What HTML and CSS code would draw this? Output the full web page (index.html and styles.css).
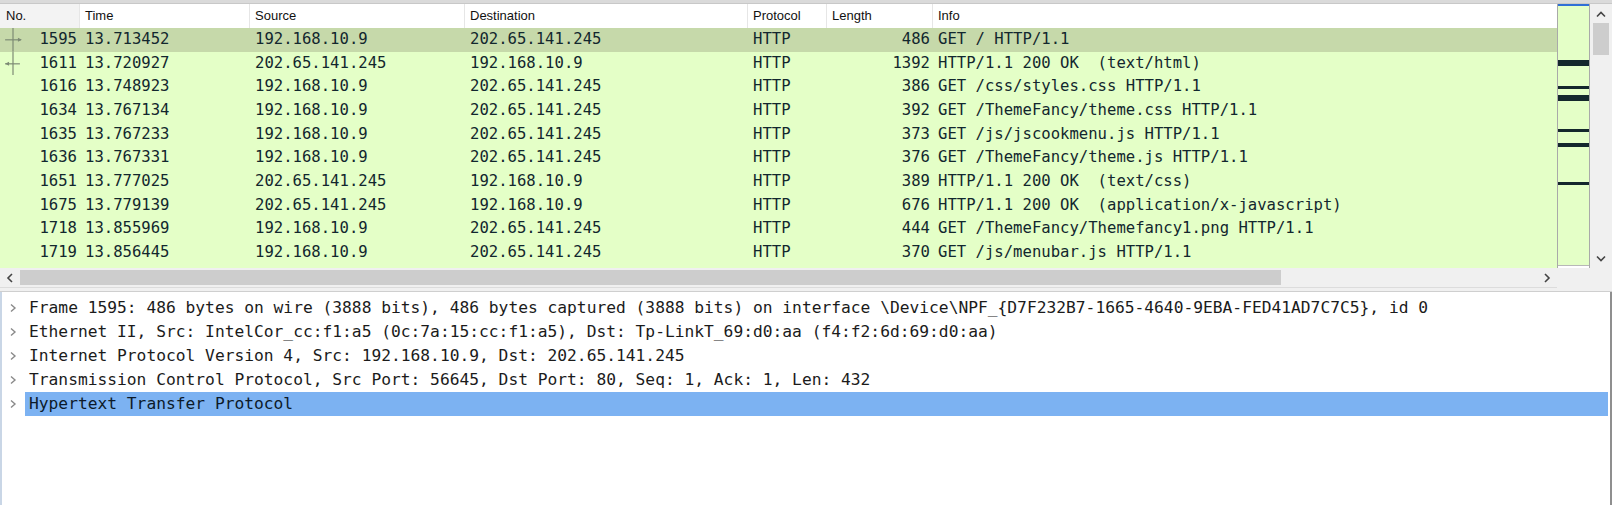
FILE: index.html
```html
<!DOCTYPE html>
<html>
<head>
<meta charset="utf-8">
<link rel="stylesheet" href="styles.css">
</head>
<body>
<div class="app">
  <div class="top-edge"></div>
  <div class="packet-area">
    <div class="list">
      <div class="hdr">
        <div class="hc hc-no">No.</div>
        <div class="hc">Time</div>
        <div class="hc">Source</div>
        <div class="hc">Destination</div>
        <div class="hc">Protocol</div>
        <div class="hc">Length</div>
        <div class="hc hc-last">Info</div>
      </div>
      <div class="rows">
        <div class="row sel">
          <div class="c no"><svg class="rel" width="26" height="24" viewBox="0 0 26 24"><line x1="13" y1="0" x2="13" y2="24" stroke="#7c8a74" stroke-width="1.2"/><line x1="5" y1="12" x2="21" y2="12" stroke="#7c8a74" stroke-width="1.2"/><path d="M18 10 L22 12 L18 14 Z" fill="#7c8a74"/></svg>1595</div>
          <div class="c">13.713452</div><div class="c">192.168.10.9</div><div class="c">202.65.141.245</div><div class="c">HTTP</div><div class="c len">486</div><div class="c info">GET / HTTP/1.1</div>
        </div>
        <div class="row">
          <div class="c no"><svg class="rel" width="26" height="24" viewBox="0 0 26 24"><line x1="13" y1="0" x2="13" y2="24" stroke="#7c8a74" stroke-width="1.2"/><line x1="5" y1="12" x2="20" y2="12" stroke="#7c8a74" stroke-width="1.2"/><path d="M9 10 L5 12 L9 14 Z" fill="#7c8a74"/></svg>1611</div>
          <div class="c">13.720927</div><div class="c">202.65.141.245</div><div class="c">192.168.10.9</div><div class="c">HTTP</div><div class="c len">1392</div><div class="c info">HTTP/1.1 200 OK  (text/html)</div>
        </div>
        <div class="row">
          <div class="c no">1616</div>
          <div class="c">13.748923</div><div class="c">192.168.10.9</div><div class="c">202.65.141.245</div><div class="c">HTTP</div><div class="c len">386</div><div class="c info">GET /css/styles.css HTTP/1.1</div>
        </div>
        <div class="row">
          <div class="c no">1634</div>
          <div class="c">13.767134</div><div class="c">192.168.10.9</div><div class="c">202.65.141.245</div><div class="c">HTTP</div><div class="c len">392</div><div class="c info">GET /ThemeFancy/theme.css HTTP/1.1</div>
        </div>
        <div class="row">
          <div class="c no">1635</div>
          <div class="c">13.767233</div><div class="c">192.168.10.9</div><div class="c">202.65.141.245</div><div class="c">HTTP</div><div class="c len">373</div><div class="c info">GET /js/jscookmenu.js HTTP/1.1</div>
        </div>
        <div class="row">
          <div class="c no">1636</div>
          <div class="c">13.767331</div><div class="c">192.168.10.9</div><div class="c">202.65.141.245</div><div class="c">HTTP</div><div class="c len">376</div><div class="c info">GET /ThemeFancy/theme.js HTTP/1.1</div>
        </div>
        <div class="row">
          <div class="c no">1651</div>
          <div class="c">13.777025</div><div class="c">202.65.141.245</div><div class="c">192.168.10.9</div><div class="c">HTTP</div><div class="c len">389</div><div class="c info">HTTP/1.1 200 OK  (text/css)</div>
        </div>
        <div class="row">
          <div class="c no">1675</div>
          <div class="c">13.779139</div><div class="c">202.65.141.245</div><div class="c">192.168.10.9</div><div class="c">HTTP</div><div class="c len">676</div><div class="c info">HTTP/1.1 200 OK  (application/x-javascript)</div>
        </div>
        <div class="row">
          <div class="c no">1718</div>
          <div class="c">13.855969</div><div class="c">192.168.10.9</div><div class="c">202.65.141.245</div><div class="c">HTTP</div><div class="c len">444</div><div class="c info">GET /ThemeFancy/Themefancy1.png HTTP/1.1</div>
        </div>
        <div class="row">
          <div class="c no">1719</div>
          <div class="c">13.856445</div><div class="c">192.168.10.9</div><div class="c">202.65.141.245</div><div class="c">HTTP</div><div class="c len">370</div><div class="c info">GET /js/menubar.js HTTP/1.1</div>
        </div>
      </div>
    </div>
    <div class="minimap">
      <div class="mark mark-sel" style="top:0px"></div>
      <div class="mark" style="top:56px;height:6px"></div>
      <div class="mark" style="top:82px;height:3px"></div>
      <div class="mark" style="top:91px;height:6px"></div>
      <div class="mark" style="top:125px;height:3px"></div>
      <div class="mark" style="top:139px;height:4px"></div>
      <div class="mark" style="top:178px;height:3px"></div>
      <div class="mini-end"></div>
    </div>
    <div class="vscroll">
      <div class="arrow-v"><svg width="12" height="8" viewBox="0 0 12 8"><polyline points="2,6.5 6,2.5 10,6.5" fill="none" stroke="#444" stroke-width="1.6"/></svg></div>
      <div class="vtrack"><div class="vthumb"></div></div>
      <div class="arrow-v"><svg width="12" height="8" viewBox="0 0 12 8"><polyline points="2,1.5 6,5.5 10,1.5" fill="none" stroke="#444" stroke-width="1.6"/></svg></div>
    </div>
    <div class="hscroll">
      <div class="arrow-h"><svg width="8" height="12" viewBox="0 0 8 12"><polyline points="6,2 2,6 6,10" fill="none" stroke="#444" stroke-width="1.6"/></svg></div>
      <div class="htrack"><div class="hthumb"></div></div>
      <div class="arrow-h"><svg width="8" height="12" viewBox="0 0 8 12"><polyline points="2,2 6,6 2,10" fill="none" stroke="#444" stroke-width="1.6"/></svg></div>
    </div>
    <div class="corner"></div>
  </div>
  <div class="splitter"></div>
  <div class="detail">
    <div class="trow"><span class="exp"><svg width="8" height="12" viewBox="0 0 8 12"><polyline points="2,2.5 6,6 2,9.5" fill="none" stroke="#8a8a8a" stroke-width="1.4"/></svg></span><span class="tlabel">Frame 1595: 486 bytes on wire (3888 bits), 486 bytes captured (3888 bits) on interface \Device\NPF_{D7F232B7-1665-4640-9EBA-FED41AD7C7C5}, id 0</span></div>
    <div class="trow"><span class="exp"><svg width="8" height="12" viewBox="0 0 8 12"><polyline points="2,2.5 6,6 2,9.5" fill="none" stroke="#8a8a8a" stroke-width="1.4"/></svg></span><span class="tlabel">Ethernet II, Src: IntelCor_cc:f1:a5 (0c:7a:15:cc:f1:a5), Dst: Tp-LinkT_69:d0:aa (f4:f2:6d:69:d0:aa)</span></div>
    <div class="trow"><span class="exp"><svg width="8" height="12" viewBox="0 0 8 12"><polyline points="2,2.5 6,6 2,9.5" fill="none" stroke="#8a8a8a" stroke-width="1.4"/></svg></span><span class="tlabel">Internet Protocol Version 4, Src: 192.168.10.9, Dst: 202.65.141.245</span></div>
    <div class="trow"><span class="exp"><svg width="8" height="12" viewBox="0 0 8 12"><polyline points="2,2.5 6,6 2,9.5" fill="none" stroke="#8a8a8a" stroke-width="1.4"/></svg></span><span class="tlabel">Transmission Control Protocol, Src Port: 56645, Dst Port: 80, Seq: 1, Ack: 1, Len: 432</span></div>
    <div class="trow"><span class="exp"><svg width="8" height="12" viewBox="0 0 8 12"><polyline points="2,2.5 6,6 2,9.5" fill="none" stroke="#8a8a8a" stroke-width="1.4"/></svg></span><span class="tlabel tsel">Hypertext Transfer Protocol</span></div>
  </div>
</div>
</body>
</html>
```

FILE: styles.css
```css
* { box-sizing: border-box; }
html, body { margin: 0; padding: 0; }
body {
  width: 1612px;
  height: 505px;
  overflow: hidden;
  background: #f0f0f0;
  font-family: "Liberation Sans", Arial, sans-serif;
}
.app {
  width: 1612px;
  height: 505px;
  display: flex;
  flex-direction: column;
}
.top-edge {
  height: 4px;
  background: #dadada;
  border-bottom: 1px solid #c8c8c8;
}
.packet-area {
  display: grid;
  grid-template-columns: 1557px 33px 22px;
  grid-template-rows: 264px 20px;
}
.list {
  overflow: hidden;
  background: #e4ffc7;
  display: flex;
  flex-direction: column;
}
.hdr {
  height: 24px;
  flex: none;
  display: grid;
  grid-template-columns: 80px 170px 215px 283px 79px 106px 1fr;
  background: #ffffff;
  font-size: 13px;
  color: #111;
}
.hc {
  line-height: 24px;
  padding-left: 5px;
  border-right: 1px solid #e6e6e6;
  white-space: nowrap;
}
.hc-no {
  background: #f3f3f3;
  padding-left: 6px;
}
.hc-last { border-right: none; }
.rows {
  font-family: "DejaVu Sans Mono", "Liberation Mono", monospace;
  font-size: 15.6px;
  color: #12272e;
}
.row {
  height: 23.67px;
  display: grid;
  grid-template-columns: 80px 170px 215px 283px 79px 106px 1fr;
  background: #e4ffc7;
}
.row.sel { background: #c6d9aa; }
.c {
  line-height: 23.67px;
  padding-left: 5px;
  white-space: pre;
  overflow: hidden;
}
.c.no {
  position: relative;
  text-align: right;
  padding-right: 3px;
}
.c.len {
  text-align: right;
  padding-right: 3px;
}
.c.info { padding-left: 5px; }
.rel {
  position: absolute;
  left: 0;
  top: 0;
  height: 100%;
}
.minimap {
  position: relative;
  background: #e4ffc7;
  border-left: 1px solid #a9a9a9;
  border-right: 1px solid #a9a9a9;
  overflow: hidden;
}
.mark {
  position: absolute;
  left: 0;
  right: 0;
  height: 3px;
  background: #14282c;
}
.mark-sel {
  height: 2px;
  background: #2f6fd6;
}
.mini-end {
  position: absolute;
  left: 0;
  right: 0;
  bottom: 0;
  height: 3px;
  background: #ffffff;
  border-top: 1px solid #b8b8b8;
}
.vscroll {
  background: #f0f0f0;
  display: flex;
  flex-direction: column;
  align-items: center;
}
.arrow-v {
  height: 19px;
  width: 100%;
  display: flex;
  align-items: center;
  justify-content: center;
}
.vtrack {
  flex: 1;
  width: 100%;
  padding: 0 3px;
}
.vthumb {
  height: 32px;
  background: #cdcdcd;
}
.hscroll {
  background: #f0f0f0;
  display: flex;
  align-items: center;
  border-bottom: 1px solid #dcdcdc;
}
.arrow-h {
  width: 20px;
  height: 100%;
  display: flex;
  align-items: center;
  justify-content: center;
  flex: none;
}
.htrack {
  flex: 1;
  height: 100%;
  padding: 2px 0;
}
.hthumb {
  width: 1261px;
  height: 100%;
  background: #cdcdcd;
}
.corner {
  grid-column: 2 / 4;
  background: #f0f0f0;
}
.splitter {
  height: 4px;
  background: #f0f0f0;
  border-bottom: 1px solid #cfcfcf;
}
.detail {
  flex: 1;
  background: #ffffff;
  border-left: 2px solid #c9d6e6;
  border-right: 2px solid #8f8f8f;
  padding-top: 4px;
  font-family: "DejaVu Sans Mono", "Liberation Mono", monospace;
  font-size: 16.25px;
  color: #1b1b1b;
}
.trow {
  height: 24px;
  display: flex;
  align-items: stretch;
  white-space: pre;
}
.exp {
  width: 23px;
  flex: none;
  display: flex;
  align-items: center;
  padding-left: 7px;
}
.tlabel {
  line-height: 24px;
  padding-left: 4px;
}
.tsel {
  flex: 1;
  background: #7cb2f2;
  color: #0c1a2a;
  margin-right: 2px;
}
```
